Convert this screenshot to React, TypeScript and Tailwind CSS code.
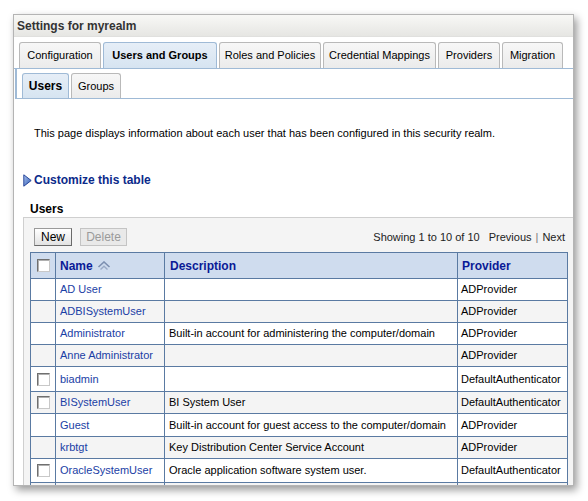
import React from "react";

const font = { fontFamily: '"Liberation Sans", Arial, sans-serif' };

const tabs = [
  { label: "Configuration", w: "w-[82px]", sel: false },
  { label: "Users and Groups", w: "w-[114px]", sel: true },
  { label: "Roles and Policies", w: "w-[102px]", sel: false },
  { label: "Credential Mappings", w: "w-[113px]", sel: false },
  { label: "Providers", w: "w-[62px]", sel: false },
  { label: "Migration", w: "w-[61px]", sel: false },
];

type Row = { name: string; desc: string; prov: string; cb: boolean; h: string; bg: string };

const rows: Row[] = [
  { name: "AD User", desc: "", prov: "ADProvider", cb: false, h: "h-[22px]", bg: "bg-white" },
  { name: "ADBISystemUser", desc: "", prov: "ADProvider", cb: false, h: "h-[22px]", bg: "bg-[#f4f4f4]" },
  { name: "Administrator", desc: "Built-in account for administering the computer/domain", prov: "ADProvider", cb: false, h: "h-[22px]", bg: "bg-white" },
  { name: "Anne Administrator", desc: "", prov: "ADProvider", cb: false, h: "h-[22px]", bg: "bg-[#f4f4f4]" },
  { name: "biadmin", desc: "", prov: "DefaultAuthenticator", cb: true, h: "h-[25px]", bg: "bg-white" },
  { name: "BISystemUser", desc: "BI System User", prov: "DefaultAuthenticator", cb: true, h: "h-[22px]", bg: "bg-[#f4f4f4]" },
  { name: "Guest", desc: "Built-in account for guest access to the computer/domain", prov: "ADProvider", cb: false, h: "h-[23px]", bg: "bg-white" },
  { name: "krbtgt", desc: "Key Distribution Center Service Account", prov: "ADProvider", cb: false, h: "h-[22px]", bg: "bg-[#f4f4f4]" },
  { name: "OracleSystemUser", desc: "Oracle application software system user.", prov: "DefaultAuthenticator", cb: true, h: "h-[24px]", bg: "bg-white" },
  { name: "", desc: "", prov: "", cb: false, h: "h-[22px]", bg: "bg-[#f4f4f4]" },
];

function Checkbox() {
  return (
    <div className="w-[13px] h-[13px] bg-white border border-t-[#6f6f6f] border-l-[#6f6f6f] border-r-[#c8c8c8] border-b-[#c8c8c8] shadow-[inset_1px_1px_0_#b0b0b0]" />
  );
}

function SortIcon() {
  return (
    <svg width="14" height="10" viewBox="0 0 14 10" className="ml-[4px]">
      <polyline points="1.5,6 7,1 12.5,6" fill="none" stroke="#7c8fb0" strokeWidth="1.6" />
      <polyline points="3.5,8.5 7,5.2 10.5,8.5" fill="none" stroke="#9aaac6" strokeWidth="1.4" />
    </svg>
  );
}

function TriIcon() {
  return (
    <svg width="9" height="13" viewBox="0 0 9 13">
      <defs>
        <linearGradient id="tg" x1="0" y1="0" x2="1" y2="1">
          <stop offset="0" stopColor="#a9c2ee" />
          <stop offset="1" stopColor="#2f5bb5" />
        </linearGradient>
      </defs>
      <polygon points="0.8,0.8 8.2,6.5 0.8,12.2" fill="url(#tg)" stroke="#28479a" strokeWidth="1" />
    </svg>
  );
}

export default function App() {
  return (
    <div className="w-[588px] h-[501px] bg-white pl-[13px] pt-[14px] text-[11px] text-black" style={font}>
      <div className="w-[561px] h-[472px] border border-[#b4b4b4] bg-white overflow-hidden shadow-[3px_4px_8px_rgba(0,0,0,0.4)] flex flex-col">
        {/* title bar */}
        <div className="h-[22px] shrink-0 flex items-center pl-[3px] bg-gradient-to-b from-[#f8f8f6] to-[#e6e6e3] border-b border-[#e0e0de]">
          <span className="text-[12px] font-bold text-[#333333]">Settings for myrealm</span>
        </div>
        {/* tabs */}
        <div className="mt-[5px] shrink-0 flex gap-[2px] pl-[5px] border-b border-[#9fbad6]">
          {tabs.map((t) => (
            <div
              key={t.label}
              className={
                t.sel
                  ? `${t.w} h-[26px] flex items-center justify-center rounded-t-[3px] border border-b-0 border-[#9fbad6] bg-gradient-to-b from-[#e6eef7] to-[#d6e4f1] font-bold text-[11px] text-black`
                  : `${t.w} h-[26px] flex items-center justify-center rounded-t-[3px] border border-b-0 border-[#b9b9b9] bg-gradient-to-b from-[#f7f7f7] to-[#ebebeb] text-[11px] text-black`
              }
            >
              {t.label}
            </div>
          ))}
        </div>
        {/* subtabs */}
        <div className="ml-px h-[30px] shrink-0 flex items-end gap-[2px] pl-[5px] border-l-2 border-b border-[#9fbad6]">
          <div className="w-[47px] h-[25px] flex items-center justify-center rounded-t-[3px] border border-b-0 border-[#9fbad6] bg-gradient-to-b from-[#e6eef7] to-[#d6e4f1] font-bold text-[12px]">
            Users
          </div>
          <div className="w-[50px] h-[25px] flex items-center justify-center rounded-t-[3px] border border-b-0 border-[#b9b9b9] bg-gradient-to-b from-[#f7f7f7] to-[#ebebeb] text-[11px]">
            Groups
          </div>
        </div>
        {/* intro */}
        <div className="mt-[28px] pl-[20px] leading-[13px] shrink-0">
          This page displays information about each user that has been configured in this security realm.
        </div>
        <div className="mt-[33px] pl-[9px] flex items-center gap-[2px] shrink-0">
          <TriIcon />
          <span className="text-[12px] font-bold text-[#0b2a8a] leading-[14px]">Customize this table</span>
        </div>
        <div className="mt-[15px] pl-[16px] text-[12px] font-bold leading-[14px] shrink-0">Users</div>
        {/* panel */}
        <div className="mt-[1px] ml-[9px] flex-1 border-t border-l border-[#cfcfcf] bg-[#f4f4f4] pt-[10px] pl-[10px] pr-[8px]">
          <div className="flex items-center">
            <div className="w-[38px] h-[18px] flex items-center justify-center border border-[#9a9a9a] border-r-[#6a6a6a] border-b-[#6a6a6a] bg-gradient-to-b from-white to-[#e2e2e2] text-[12px]">
              New
            </div>
            <div className="ml-[8px] w-[47px] h-[18px] flex items-center justify-center border border-[#c4c4c4] bg-[#e9e9e9] text-[12px] text-[#9a9a9a]">
              Delete
            </div>
            <div className="ml-auto flex items-center text-[11px] text-[#222]">
              <span>Showing 1 to 10 of 10</span>
              <span className="ml-[9px]">Previous</span>
              <span className="mx-[4px] text-[#777]">|</span>
              <span>Next</span>
            </div>
          </div>
          {/* table */}
          <div className="mt-[6px] ml-[-4px] w-[538px] border-t border-l border-[#5a7aa2]">
            <div className="flex h-[26px] border-b border-[#5a7aa2] bg-[#cfdcee] text-[12px] font-bold text-[#0a1a96]">
              <div className="w-[25px] border-r border-[#5a7aa2] flex items-center justify-center">
                <Checkbox />
              </div>
              <div className="w-[109px] border-r border-[#5a7aa2] flex items-center pl-[4px]">
                Name
                <SortIcon />
              </div>
              <div className="w-[293px] border-r border-[#5a7aa2] flex items-center pl-[5px]">Description</div>
              <div className="w-[110px] border-r border-[#5a7aa2] flex items-center pl-[4px]">Provider</div>
            </div>
            {rows.map((r, i) => (
              <div key={i} className={`flex ${r.h} ${r.bg} border-b border-[#5a7aa2]`}>
                <div className="w-[25px] border-r border-[#5a7aa2] flex items-center justify-center">
                  {r.cb ? <Checkbox /> : null}
                </div>
                <div className="w-[109px] border-r border-[#5a7aa2] flex items-center pl-[4px] text-[#1a3ea5] whitespace-nowrap">
                  {r.name}
                </div>
                <div className="w-[293px] border-r border-[#5a7aa2] flex items-center pl-[4px] whitespace-nowrap">{r.desc}</div>
                <div className="w-[110px] border-r border-[#5a7aa2] flex items-center pl-[3px] whitespace-nowrap">{r.prov}</div>
              </div>
            ))}
          </div>
        </div>
      </div>
    </div>
  );
}
